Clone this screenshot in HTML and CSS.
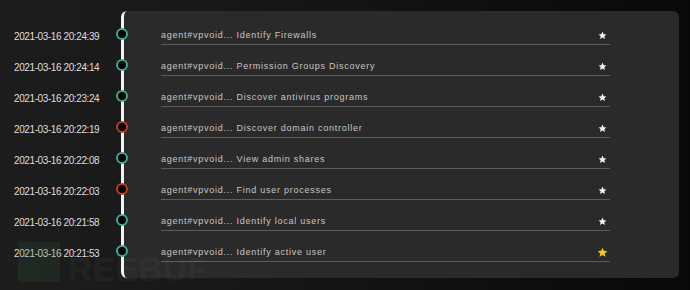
FILE: index.html
```html
<!DOCTYPE html>
<html>
<head>
<meta charset="utf-8">
<link rel="stylesheet" href="styles.css">
</head>
<body>
<div class="wrap">
  <div class="times">
    <div class="time">2021-03-16 20:24:39</div>
    <div class="time">2021-03-16 20:24:14</div>
    <div class="time">2021-03-16 20:23:24</div>
    <div class="time">2021-03-16 20:22:19</div>
    <div class="time">2021-03-16 20:22:08</div>
    <div class="time">2021-03-16 20:22:03</div>
    <div class="time">2021-03-16 20:21:58</div>
    <div class="time">2021-03-16 20:21:53</div>
  </div>
  <div class="panel">
    <div class="row"><span class="dot"></span><span class="txt">agent#vpvoid... Identify Firewalls</span><svg class="star" viewBox="0 0 24 24"><path d="M12 1.5l3.1 6.9 7.4.7-5.6 5 1.7 7.4L12 17.6l-6.6 3.9 1.7-7.4-5.6-5 7.4-.7z"/></svg></div>
    <div class="row"><span class="dot"></span><span class="txt">agent#vpvoid... Permission Groups Discovery</span><svg class="star" viewBox="0 0 24 24"><path d="M12 1.5l3.1 6.9 7.4.7-5.6 5 1.7 7.4L12 17.6l-6.6 3.9 1.7-7.4-5.6-5 7.4-.7z"/></svg></div>
    <div class="row"><span class="dot"></span><span class="txt">agent#vpvoid... Discover antivirus programs</span><svg class="star" viewBox="0 0 24 24"><path d="M12 1.5l3.1 6.9 7.4.7-5.6 5 1.7 7.4L12 17.6l-6.6 3.9 1.7-7.4-5.6-5 7.4-.7z"/></svg></div>
    <div class="row"><span class="dot red"></span><span class="txt">agent#vpvoid... Discover domain controller</span><svg class="star" viewBox="0 0 24 24"><path d="M12 1.5l3.1 6.9 7.4.7-5.6 5 1.7 7.4L12 17.6l-6.6 3.9 1.7-7.4-5.6-5 7.4-.7z"/></svg></div>
    <div class="row"><span class="dot"></span><span class="txt">agent#vpvoid... View admin shares</span><svg class="star" viewBox="0 0 24 24"><path d="M12 1.5l3.1 6.9 7.4.7-5.6 5 1.7 7.4L12 17.6l-6.6 3.9 1.7-7.4-5.6-5 7.4-.7z"/></svg></div>
    <div class="row"><span class="dot red"></span><span class="txt">agent#vpvoid... Find user processes</span><svg class="star" viewBox="0 0 24 24"><path d="M12 1.5l3.1 6.9 7.4.7-5.6 5 1.7 7.4L12 17.6l-6.6 3.9 1.7-7.4-5.6-5 7.4-.7z"/></svg></div>
    <div class="row"><span class="dot"></span><span class="txt">agent#vpvoid... Identify local users</span><svg class="star" viewBox="0 0 24 24"><path d="M12 1.5l3.1 6.9 7.4.7-5.6 5 1.7 7.4L12 17.6l-6.6 3.9 1.7-7.4-5.6-5 7.4-.7z"/></svg></div>
    <div class="row"><span class="dot"></span><span class="txt">agent#vpvoid... Identify active user</span><svg class="star gold" viewBox="0 0 24 24"><path d="M12 1.5l3.1 6.9 7.4.7-5.6 5 1.7 7.4L12 17.6l-6.6 3.9 1.7-7.4-5.6-5 7.4-.7z"/></svg></div>
  </div>
</div>
<div class="watermark"><span class="wm-logo"></span><span class="wm-text">REEBUF</span></div>
</body>
</html>
```
FILE: styles.css
```css
html, body {
  margin: 0;
  padding: 0;
}
body {
  width: 690px;
  height: 290px;
  overflow: hidden;
  background: linear-gradient(to right, #1d1d1d 0%, #161616 40%, #0e0e0e 75%, #090909 100%);
  font-family: "Liberation Sans", Arial, sans-serif;
  position: relative;
}
.wrap {
  display: flex;
  padding-top: 11px;
}
.times {
  width: 121px;
  box-sizing: border-box;
  padding-top: 10px;
  padding-left: 14px;
}
.time {
  height: 31px;
  line-height: 31px;
  font-size: 10px;
  letter-spacing: -0.4px;
  color: #dedede;
  white-space: nowrap;
}
.panel {
  width: 558px;
  height: 267px;
  box-sizing: border-box;
  background: #2a2a2a;
  border-left: 3px solid #f2f2f2;
  border-radius: 6px;
  padding: 3px 0 0 37px;
}
.row {
  position: relative;
  width: 449px;
  height: 31px;
  box-sizing: border-box;
  padding-top: 14px;
  padding-bottom: 2px;
  border-bottom: 1px solid #5c5c5c;
  display: flex;
  align-items: center;
  line-height: 14px;
}
.dot {
  position: absolute;
  left: -45px;
  top: 14px;
  width: 12px;
  height: 12px;
  box-sizing: border-box;
  border-radius: 50%;
  border: 2.5px solid #3ea894;
  background: #000;
}
.dot.red {
  border-color: #c63b1d;
}
.txt {
  flex: 1;
  font-size: 9px;
  letter-spacing: 0.75px;
  color: #c6c6c6;
  white-space: nowrap;
}
.star {
  width: 9px;
  height: 9px;
  margin-right: 3px;
  fill: #f4f6fa;
}
.star.gold {
  width: 11px;
  height: 11px;
  margin-right: 2px;
  fill: #f2c81c;
}
.watermark {
  position: absolute;
  left: 18px;
  top: 242px;
  display: flex;
  align-items: flex-start;
  gap: 8px;
  pointer-events: none;
}
.wm-logo {
  width: 42px;
  height: 40px;
  background: rgba(40, 90, 60, 0.22);
}
.wm-text {
  font-family: "Liberation Sans", Arial, sans-serif;
  font-weight: bold;
  font-size: 34px;
  line-height: 34px;
  margin-top: 10px;
  color: rgba(255, 255, 255, 0.05);
}
```
